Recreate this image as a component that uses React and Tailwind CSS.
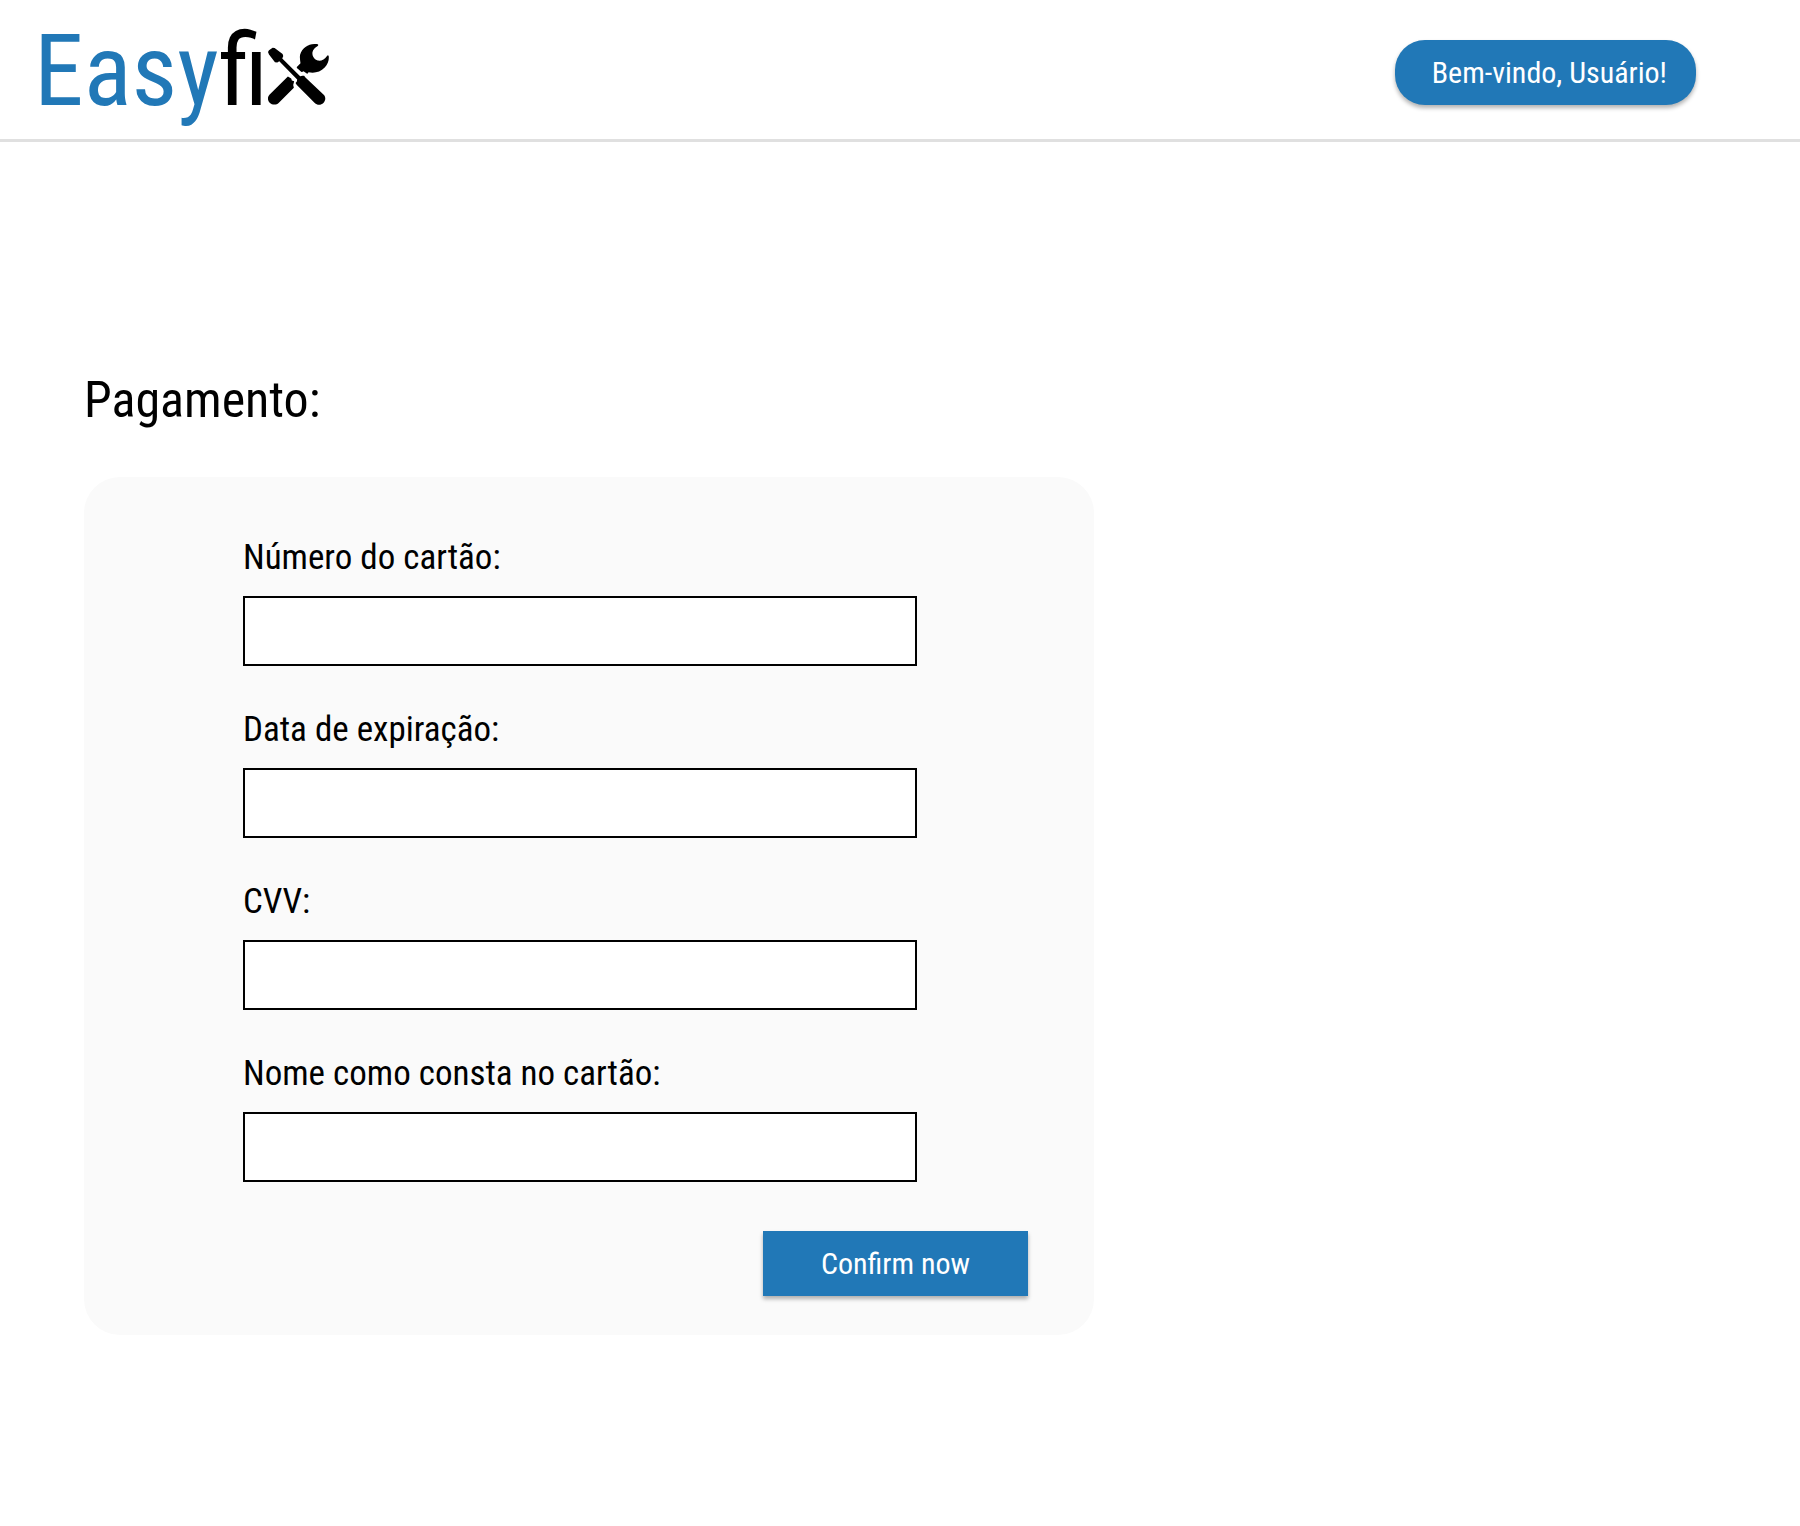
const fields = [
  { id: "card-number", label: "Número do cartão:", autoComplete: "cc-number" },
  { id: "card-expiry", label: "Data de expiração:", autoComplete: "cc-exp" },
  { id: "card-cvv", label: "CVV:", autoComplete: "cc-csc" },
  { id: "card-name", label: "Nome como consta no cartão:", autoComplete: "cc-name" },
];

function ToolsIcon({ className }) {
  return (
    <svg viewBox="804 132 184 184" className={className} fill="#000" aria-hidden="true">
      {/* wrench head */}
      <path d="M954 133C932 128 907 142 901 164C899 173 901 182 902 190L891 201Q890 205 894 207L904 216Q908 217 911 214L922 222Q925 221 926 217C943 221 962 217 975 203C985 193 989 178 987 168Q985 164 982 168C975 178 965 184 954 182C944 179 937 169 938 158C939 149 946 142 954 138Q957 135 954 133Z" />
      {/* wrench handle */}
      <path d="M864 230L809 284C802 291 802 302 809 309C816 316 829 317 836 310L882 264L880 256L883 244L876 242L874 236Z" />
      {/* screwdriver */}
      <path d="M804 156L807 151L818 143L824 144L848 162L850 168L847 176L901 229L908 228L913 228L917 233L972 285C979 292 978 303 971 310C964 317 952 317 945 310L891 256L887 250L891 245L892 239L838 184L832 188L825 187L807 164Z" />
    </svg>
  );
}

export default function App() {
  return (
    <div className="min-h-screen bg-white font-['Roboto_Condensed',Roboto,sans-serif] text-black">
      <header className="flex h-[142px] items-start justify-between border-b-[3px] border-[#e0e0e0] pt-10 pr-[104px] pl-[34px]">
        <a href="#" aria-label="Easyfix" className="flex items-baseline">
          <span className="text-[100px] leading-[62px]">
            <span className="text-[#2178b7]">Easy</span>fi
          </span>
          <ToolsIcon className="size-[61px]" />
        </a>
        <button
          type="button"
          className="h-[65px] rounded-[30px] bg-[#2178b7] pr-[29px] pl-[37px] text-[30px] text-white shadow-[0_3px_4px_rgba(0,0,0,0.3)]"
        >
          Bem-vindo, Usuário!
        </button>
      </header>
      <main className="px-[84px] pt-[228px] pb-16">
        <h1 className="text-[50px] leading-[60px]">Pagamento:</h1>
        <form className="mt-[47px] max-w-[1010px] rounded-[36px] bg-[#fafafa] pt-14 pr-[66px] pb-[39px] pl-[159px]">
          <div className="mr-[111px] flex flex-col gap-[39px]">
            {fields.map((f) => (
              <div key={f.id} className="flex flex-col gap-[13px]">
                <label htmlFor={f.id} className="text-[35px] leading-[50px]">
                  {f.label}
                </label>
                <input
                  id={f.id}
                  type="text"
                  autoComplete={f.autoComplete}
                  className="h-[70px] w-full border-2 border-black bg-white px-4 text-[30px]"
                />
              </div>
            ))}
          </div>
          <div className="mt-[49px] flex justify-end">
            <button
              type="submit"
              className="h-[65px] w-[265px] bg-[#2178b7] text-[30px] text-white shadow-[0_3px_4px_rgba(0,0,0,0.3)]"
            >
              Confirm now
            </button>
          </div>
        </form>
      </main>
    </div>
  );
}
